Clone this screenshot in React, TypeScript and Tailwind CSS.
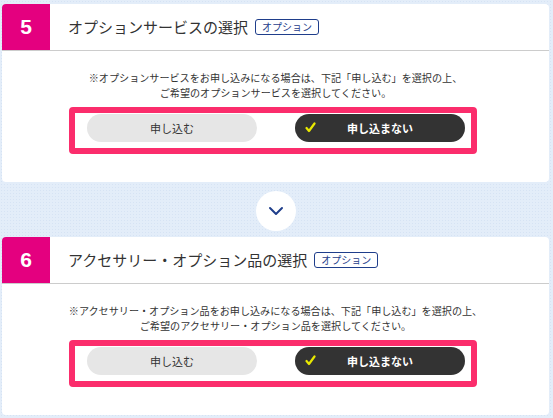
import React from 'react';

const sections = [
  {
    num: '5',
    title: 'オプションサービスの選択',
    lines: [
      '※オプションサービスをお申し込みになる場合は、下記「申し込む」を選択の上、',
      'ご希望のオプションサービスを選択してください。',
    ],
  },
  {
    num: '6',
    title: 'アクセサリー・オプション品の選択',
    lines: [
      '※アクセサリー・オプション品をお申し込みになる場合は、下記「申し込む」を選択の上、',
      'ご希望のアクセサリー・オプション品を選択してください。',
    ],
  },
];

const Section = ({ num, title, lines }: { num: string; title: string; lines: string[] }) => (
  <div className="bg-white rounded-[4px] overflow-hidden">
    {/* Header */}
    <div className="flex items-center h-[47px] border-b border-[#cccccc]">
      <div className="w-[48px] h-[46px] bg-[#e4007f] flex items-center justify-center text-white text-[21px] font-bold font-['Liberation_Sans',sans-serif] self-start">
        {num}
      </div>
      <h2 className="ml-[18px] text-[15px] text-[#333333]">{title}</h2>
      <span className="ml-[7px] px-[6px] h-[16px] flex items-center border border-[#1f3e8b] rounded-[3px] text-[10px] text-[#1f3e8b] leading-none">
        オプション
      </span>
    </div>

    {/* Body */}
    <div className="pt-[19px] pb-[28px]">
      <p className="text-center text-[10.1px] leading-[15px] text-[#333333]">
        {lines.map((l) => (
          <span key={l} className="block">{l}</span>
        ))}
      </p>
      <div className="mt-[7px] ml-[67px] w-[408px] border-[6px] border-[#fb2d6c] rounded-[4px] flex gap-[38px] pl-[12px] pt-[1px] pb-[6px]">
        <button className="w-[170px] h-[28px] rounded-full bg-[#e6e6e6] text-[11px] text-[#333333]">
          申し込む
        </button>
        <button className="relative w-[170px] h-[28px] rounded-full bg-[#333333] text-[11px] font-bold text-white">
          <svg
            className="absolute left-[10px] top-[8px]"
            width="11"
            height="11"
            viewBox="0 0 11 11"
            fill="none"
          >
            <path d="M1.5 6 L4 9 L9.5 1.5" stroke="#e8e800" strokeWidth="2.2" strokeLinecap="round" strokeLinejoin="round" />
          </svg>
          申し込まない
        </button>
      </div>
    </div>
  </div>
);

export default function App() {
  return (
    <div className="w-[553px] h-[418px] overflow-hidden bg-[#e3edf9] bg-[radial-gradient(#d6e3f4_0.8px,transparent_0.8px)] bg-[size:3px_3px] pt-[4px] pl-[2px] pr-[4px] font-['Noto_Sans_CJK_JP',sans-serif]">
      <Section {...sections[0]} />

      <div className="flex justify-center pt-[9px] pb-[6px]">
        <div className="w-[40px] h-[40px] rounded-full bg-white flex items-center justify-center">
          <svg width="16" height="10" viewBox="0 0 16 10" fill="none">
            <path d="M2 2 L8 8 L14 2" stroke="#1f3e8b" strokeWidth="2" strokeLinecap="round" strokeLinejoin="round" />
          </svg>
        </div>
      </div>

      <Section {...sections[1]} />
    </div>
  );
}
